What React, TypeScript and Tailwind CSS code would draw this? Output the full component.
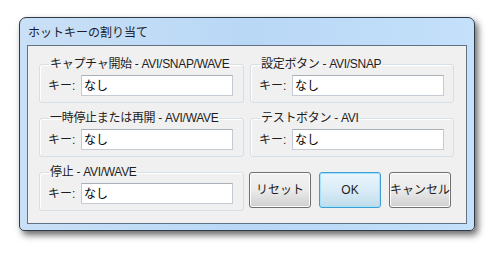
import React from "react";

const font = { fontFamily: '"Liberation Sans", "Noto Sans CJK JP", sans-serif' };

interface GroupProps {
  title: string;
}

const KeyGroup = ({ title }: GroupProps) => {
  return (
    <fieldset className="h-[46px] min-w-0 rounded-[3px] border border-[#d5dfe5] px-[8px] pb-[5px] shadow-[inset_1px_1px_0_#ffffff]">
      <legend className="ml-[1px] whitespace-nowrap px-[1px] text-[12px] leading-[14px] tracking-[-0.3px] text-[#1e1e1e]">
        {title}
      </legend>
      <div className="mt-[4px] flex items-center">
        <span className="w-[33px] text-[12px] leading-[14px] text-[#1e1e1e]">{"キー:"}</span>
        <div className="flex h-[21px] w-[152px] items-center border border-[#c4cbd3] border-t-[#a9b0b8] bg-white pl-[2px] text-[12px] leading-[14px] text-black">
          {"なし"}
        </div>
      </div>
    </fieldset>
  );
};

const WinButton = ({ label, primary }: { label: string; primary?: boolean }) => {
  return (
    <button
      className={
        primary
          ? "h-[36px] w-[62px] rounded-[3px] border border-[#3c9fd6] bg-gradient-to-b from-[#eaf6fd] via-[#d9ecf7] to-[#bfdcec] text-[12px] text-[#1e1e1e] shadow-[inset_0_0_0_1px_#a6e2fb]"
          : "h-[36px] w-[62px] rounded-[3px] border border-[#707070] bg-gradient-to-b from-[#f2f2f2] via-[#ebebeb] to-[#cfcfcf] text-[12px] text-[#1e1e1e] shadow-[inset_0_0_0_1px_#fcfcfc]"
      }
    >
      {label}
    </button>
  );
};

export default function App() {
  return (
    <div className="h-[253px] w-[496px] bg-white pl-[19px] pt-[17px]" style={font}>
      <div className="flex h-[214px] w-[456px] flex-col rounded-t-[7px] rounded-b-[5px] border border-[#2f3b47] bg-gradient-to-r from-[#c9e0f6] via-[#b9d8f6] to-[#c4e0fa] px-[7px] pb-[6px] shadow-[3px_4px_7px_rgba(0,0,0,0.6)]">
        <div className="flex h-[27px] items-center pl-[1px] pt-[2px] text-[12px] text-[#1c1c2c]">
          {"ホットキーの割り当て"}
        </div>
        <div className="flex-1 border border-[#5f7385] bg-[#f0f0f0] pl-[11px] pt-[11px]">
          <div className="grid grid-cols-[205px_204px] gap-x-[6px] gap-y-[8px]">
            <KeyGroup title="キャプチャ開始 - AVI/SNAP/WAVE" />
            <KeyGroup title="設定ボタン - AVI/SNAP" />
            <KeyGroup title="一時停止または再開 - AVI/WAVE" />
            <KeyGroup title="テストボタン - AVI" />
            <KeyGroup title="停止 - AVI/WAVE" />
            <div className="-ml-[1px] mt-[7px] flex gap-[8px]">
              <WinButton label="リセット" />
              <WinButton label="OK" primary />
              <WinButton label="キャンセル" />
            </div>
          </div>
        </div>
      </div>
    </div>
  );
}
